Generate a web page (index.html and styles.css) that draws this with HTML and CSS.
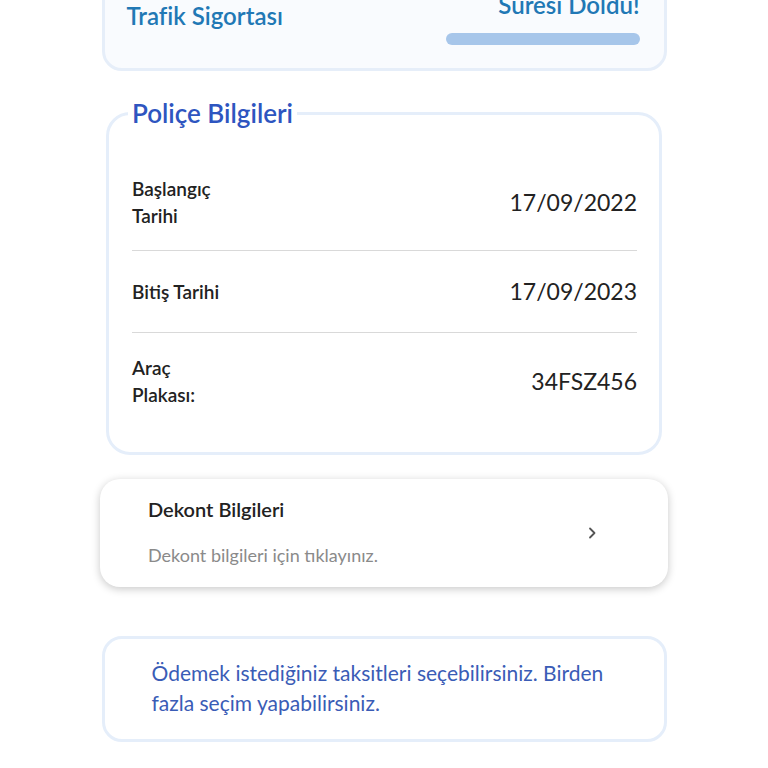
FILE: index.html
```html
<!DOCTYPE html>
<html lang="tr">
<head>
<meta charset="utf-8">
<title>Poliçe Detayı</title>
<link rel="stylesheet" href="styles.css">
</head>
<body>
<main class="page">
  <section class="policy-head">
    <div class="policy-name">Trafik Sigortası</div>
    <div class="status">
      <div class="status-text">Süresi Doldu!</div>
      <div class="status-bar"></div>
    </div>
  </section>

  <fieldset class="info-box">
    <legend class="info-title">Poliçe Bilgileri</legend>
    <div class="row">
      <div class="label">Başlangıç<br>Tarihi</div>
      <div class="value">17/09/2022</div>
    </div>
    <div class="row">
      <div class="label">Bitiş Tarihi</div>
      <div class="value">17/09/2023</div>
    </div>
    <div class="row">
      <div class="label">Araç<br>Plakası:</div>
      <div class="value">34FSZ456</div>
    </div>
  </fieldset>

  <a class="link-card" href="#">
    <div class="link-text">
      <div class="link-title">Dekont Bilgileri</div>
      <div class="link-sub">Dekont bilgileri için tıklayınız.</div>
    </div>
    <svg class="chevron" width="10" height="14" viewBox="0 0 10 14" aria-hidden="true">
      <path d="M3 2.5 L7.5 7 L3 11.5" fill="none" stroke="#555" stroke-width="1.8" stroke-linecap="round" stroke-linejoin="round"/>
    </svg>
  </a>

  <section class="notice">
    Ödemek istediğiniz taksitleri seçebilirsiniz. Birden<br>fazla seçim yapabilirsiniz.
  </section>
</main>
</body>
</html>
```

FILE: styles.css
```css
* { box-sizing: border-box; }

html, body {
  margin: 0;
  padding: 0;
  background: #ffffff;
  font-family: Lato, "Noto Sans", sans-serif;
  overflow: hidden;
}

.page {
  width: 568px;
  margin: 0 auto;
  display: flex;
  flex-direction: column;
  align-items: center;
}

.policy-head {
  width: 565px;
  margin-top: -32px;
  padding: 20px 24px 23px 22px;
  border: 3px solid #e6eef9;
  border-radius: 20px;
  background: #f9fbfe;
  display: flex;
  justify-content: space-between;
  align-items: flex-start;
}

.policy-name {
  margin-top: 11px;
  font-size: 24px;
  line-height: 28px;
  font-weight: 600;
  color: #2178b5;
}

.status {
  width: 194px;
  display: flex;
  flex-direction: column;
  align-items: flex-end;
}

.status-text {
  font-size: 24px;
  line-height: 28px;
  font-weight: 600;
  color: #2178b5;
  white-space: nowrap;
}

.status-bar {
  margin-top: 14px;
  width: 194px;
  height: 12px;
  border-radius: 6px;
  background: #a7c6ea;
}

.info-box {
  width: 556px;
  margin: 26px 0 0;
  padding: 25px 22px 23px 23px;
  border: 3px solid #e5eefa;
  border-radius: 24px;
  background: #ffffff;
  min-width: 0;
}

.info-title {
  margin-left: -4px;
  padding: 0 4px;
  font-size: 26px;
  line-height: 32px;
  font-weight: 600;
  color: #2e55c0;
}

.row {
  display: flex;
  justify-content: space-between;
  align-items: center;
  padding: 21px 0;
  border-bottom: 1px solid #d9d9d9;
}

.row:last-child { border-bottom: none; }

.label {
  font-size: 19px;
  line-height: 27px;
  font-weight: 600;
  color: #222222;
}

.value {
  font-size: 23px;
  line-height: 39px;
  color: #222222;
}

.link-card {
  width: 568px;
  height: 108px;
  margin-top: 24px;
  padding: 17px 71px 0 48px;
  border-radius: 20px;
  background: #ffffff;
  box-shadow: 0 2px 8px rgba(0, 0, 0, 0.22);
  display: flex;
  justify-content: space-between;
  align-items: flex-start;
  text-decoration: none;
}

.link-title {
  font-size: 20px;
  line-height: 26px;
  font-weight: 600;
  color: #222222;
}

.link-sub {
  margin-top: 21px;
  font-size: 18px;
  line-height: 24px;
  color: #8a8a8a;
}

.chevron {
  margin-top: 30px;
}

.notice {
  width: 565px;
  margin-top: 49px;
  padding: 19px 30px 21px 47px;
  border: 3px solid #e5eefa;
  border-radius: 20px;
  background: #ffffff;
  font-size: 21px;
  line-height: 30px;
  color: #3a5cb6;
}
```
